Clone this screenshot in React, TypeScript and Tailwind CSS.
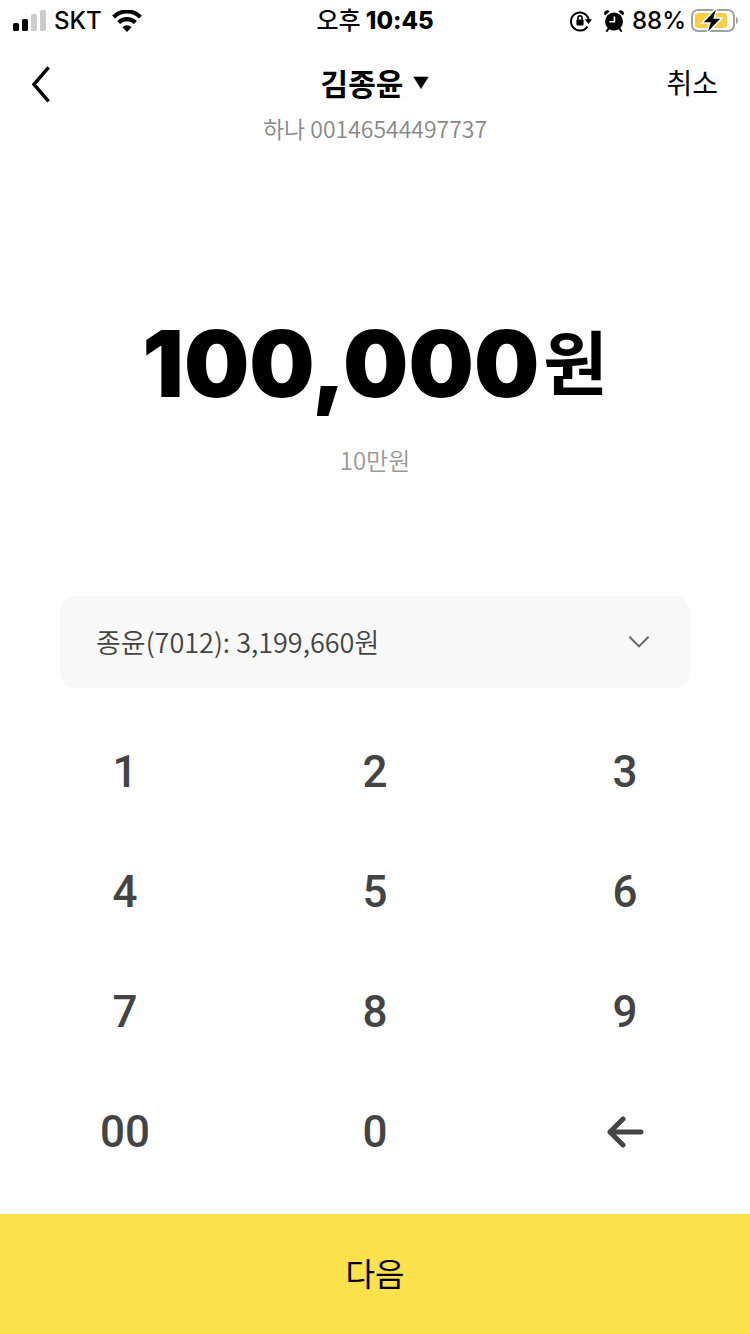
import React from "react";

const keys = ["1", "2", "3", "4", "5", "6", "7", "8", "9", "00", "0"];

function SignalIcon() {
  return (
    <svg width="34" height="22" viewBox="0 0 34 22" aria-hidden="true">
      <rect x="1" y="13" width="6" height="8" rx="1.6" />
      <rect x="10" y="9" width="6" height="12" rx="1.6" />
      <rect x="19" y="4" width="6" height="17" rx="1.6" fill="#cccccc" />
      <rect x="28" y="0" width="6" height="21" rx="1.6" fill="#cccccc" />
    </svg>
  );
}

function WifiIcon() {
  return (
    <svg width="30" height="22" viewBox="0 0 30 22" aria-hidden="true">
      <path d="M1.6 7a19 19 0 0 1 26.8 0" fill="none" stroke="#000" strokeWidth="4.2" />
      <path d="M6.6 12.6a12 12 0 0 1 16.8 0" fill="none" stroke="#000" strokeWidth="4.2" />
      <path d="M10.4 17.2a6.6 6.6 0 0 1 9.2 0L15 22z" />
    </svg>
  );
}

function RotationLockIcon() {
  return (
    <svg width="22" height="22" viewBox="0 0 22 22" aria-hidden="true">
      <path d="M17.4 16.6a9 9 0 1 1 1.4-6.6" fill="none" stroke="#000" strokeWidth="2" />
      <path d="M14.8 9.2h7.2L18.6 14z" />
      <rect x="6.4" y="9.4" width="7.2" height="6" rx="0.8" />
      <path d="M7.9 10V8a2.1 2.1 0 0 1 4.2 0V10" fill="none" stroke="#000" strokeWidth="1.6" />
    </svg>
  );
}

function AlarmIcon() {
  return (
    <svg width="20" height="22" viewBox="0 0 20 22" aria-hidden="true">
      <circle cx="10" cy="11.6" r="9" />
      <path d="M1 5.4A3 3 0 0 1 5.6 1.4zM19 5.4a3 3 0 0 0-4.6-4z" />
      <path d="M4.6 18.6 2.8 21M15.4 18.6l1.8 2.4" stroke="#000" strokeWidth="2" strokeLinecap="round" />
      <path d="M10.4 6.4v5.4H5.4" fill="none" stroke="#fff" strokeWidth="1.6" />
    </svg>
  );
}

function BatteryIcon() {
  return (
    <svg width="48" height="26" viewBox="0 0 48 26" aria-hidden="true">
      <rect x="2" y="2" width="42" height="21" rx="6" fill="none" stroke="#a0a0a0" strokeWidth="2" />
      <rect x="5" y="5" width="32" height="15" rx="3.4" fill="#f8ce46" />
      <path d="M46 9c2.6 1 2.6 6.2 0 7.2z" fill="#a0a0a0" />
      <path
        d="M26 1.4 13.8 14.2h7L18 23.6 30.2 10.8h-7z"
        stroke="#fff"
        strokeWidth="3"
        paintOrder="stroke"
      />
    </svg>
  );
}

function StatusBar() {
  return (
    <div className="grid h-10 grid-cols-[1fr_auto_1fr] items-center px-3 pt-0.5 font-['Inter','Noto_Sans_CJK_KR',sans-serif] text-2xl leading-9 font-medium">
      <div className="flex items-center gap-2">
        <SignalIcon />
        <div className="flex items-center gap-2.5">
          <span>SKT</span>
          <WifiIcon />
        </div>
      </div>
      <div className="font-extrabold">
        <span className="font-medium">오후</span> 10:45
      </div>
      <div className="flex items-center justify-end gap-1">
        <div className="flex items-center gap-3 pr-1">
          <RotationLockIcon />
          <AlarmIcon />
        </div>
        <span>88%</span>
        <BatteryIcon />
      </div>
    </div>
  );
}

export default function App() {
  return (
    <div className="flex min-h-screen flex-col bg-white font-['Noto_Sans_CJK_KR',sans-serif] text-black">
      <StatusBar />

      <header className="grid h-28 grid-cols-[1fr_auto_1fr] items-start px-8 pt-5">
        <button type="button" aria-label="뒤로" className="justify-self-start pt-1">
          <svg width="20" height="40" viewBox="0 0 20 40" fill="none" stroke="#000" strokeWidth="3.4" aria-hidden="true">
            <path d="M16.6 3.4 2 20.4l14.6 17" />
          </svg>
        </button>
        <div className="flex flex-col items-center gap-1">
          <button type="button" className="flex items-center gap-2.5 text-[30px] leading-11 font-bold">
            <h1>김종윤</h1>
            <svg width="16" height="14" viewBox="0 0 16 14" aria-hidden="true">
              <path d="M0.8 2h14.4L8 13.6z" stroke="#000" strokeWidth="0.6" strokeLinejoin="round" />
            </svg>
          </button>
          <p className="text-[23px] leading-10 font-[350] text-[#888888]">하나 00146544497737</p>
        </div>
        <button type="button" className="justify-self-end text-[28px] leading-11">취소</button>
      </header>

      <main className="flex flex-1 flex-col">
        <section className="flex flex-col items-center pt-37 pb-28 text-center">
          <p className="flex items-center gap-1 leading-30">
            <span className="font-['Inter',sans-serif] text-[92px] font-black">100,000</span>
            <span className="pb-2 text-[70px] font-bold">원</span>
          </p>
          <p className="pt-3 pb-1 text-2xl leading-10 font-[350] text-[#999999]">10만원</p>
        </section>

        <div className="relative mx-15">
          <select
            aria-label="출금 계좌"
            className="h-23 w-full appearance-none rounded-2xl bg-[#f8f8f8] pr-20 pl-9 text-[27px] font-[350] text-[#444444]"
          >
            <option>종윤(7012): 3,199,660원</option>
          </select>
          <svg
            className="pointer-events-none absolute top-10 right-10"
            width="22"
            height="14"
            viewBox="0 0 22 14"
            fill="none"
            stroke="#666666"
            strokeWidth="2"
            aria-hidden="true"
          >
            <path d="M1.4 0.8 11 10.4l9.6-9.6" />
          </svg>
        </div>

        <div className="grid grid-cols-3 pt-6 font-['Roboto',sans-serif] text-[44px] font-medium text-[#444444]">
          {keys.map((key) => (
            <button key={key} type="button" className="h-30">
              {key}
            </button>
          ))}
          <button type="button" aria-label="지우기" className="flex h-30 items-center justify-center">
            <svg
              width="38"
              height="32"
              viewBox="0 0 38 32"
              fill="none"
              stroke="#444444"
              strokeWidth="5"
              strokeLinecap="round"
              strokeLinejoin="round"
              aria-hidden="true"
            >
              <path d="M17 3 4 16l13 13M4 16h31" />
            </svg>
          </button>
        </div>
      </main>

      <button type="button" className="h-30 w-full bg-[#fae24c] pb-1 text-[32px]">
        다음
      </button>
    </div>
  );
}
